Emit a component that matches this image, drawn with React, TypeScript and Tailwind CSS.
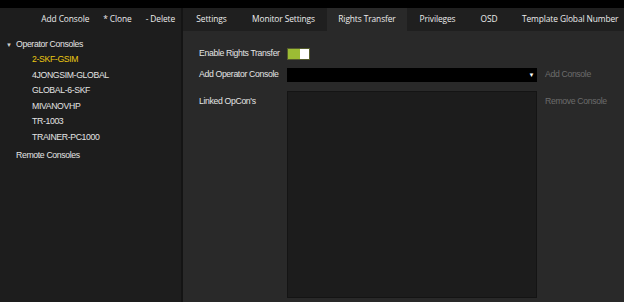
import React from 'react'

const CONSOLES = ['2-SKF-GSIM', '4JONGSIM-GLOBAL', 'GLOBAL-6-SKF', 'MIVANOVHP', 'TR-1003', 'TRAINER-PC1000']

const TABS = [
  { label: 'Settings', w: 'w-[57px]' },
  { label: 'Monitor Settings', w: 'w-[87px]' },
  { label: 'Rights Transfer', w: 'w-[80px]', active: true },
  { label: 'Privileges', w: 'w-[61px]' },
  { label: 'OSD', w: 'w-[42px]' },
  { label: 'Template Global Number', w: 'flex-1' },
]

export default function App() {
  return (
    <div className="w-[624px] h-[302px] bg-black flex flex-col overflow-hidden font-['Liberation_Sans',Arial,sans-serif] text-[8.7px] tracking-[-0.35px] text-[#e4e4e4]">
      <div className="h-[8px] bg-black" />
      <div className="flex flex-1 min-h-0">
        {/* Sidebar */}
        <div className="w-[183px] bg-[#1d1d1d] border-r-2 border-[#141414] flex flex-col">
          <div className="h-[23px] flex items-center justify-end pr-[6px] gap-[14px] text-[#ececec] font-['Open_Sans',sans-serif] text-[8.4px] tracking-[-0.1px]">
            <span>Add Console</span>
            <span>* Clone</span>
            <span>- Delete</span>
          </div>
          <div className="pt-[7px] pl-[6px]">
            <div className="flex items-center h-[14px]">
              <span className="text-[6px] w-[10px] text-[#cfcfcf]">▼</span>
              <span>Operator Consoles</span>
            </div>
            <div className="pl-[26px] flex flex-col">
              {CONSOLES.map((c, i) => (
                <div key={c} className={`h-[15.5px] flex items-center ${i === 0 ? 'text-[#ecc812]' : ''}`}>
                  {c}
                </div>
              ))}
            </div>
            <div className="pl-[10px] mt-[4px] h-[14px] flex items-center">Remote Consoles</div>
          </div>
        </div>

        {/* Main */}
        <div className="flex-1 flex flex-col bg-[#292929]">
          <div className="h-[23px] flex bg-[#1f1f1f] font-['Open_Sans',sans-serif] text-[8.4px] tracking-[-0.1px] text-[#ececec]">
            {TABS.map(t => (
              <div
                key={t.label}
                className={`${t.w} flex items-center ${t.label === 'Template Global Number' ? 'pl-[12px]' : 'justify-center'} ${t.active ? 'bg-[#292929]' : ''}`}
              >
                {t.label}
              </div>
            ))}
          </div>
          <div className="flex-1 pl-[16px] pt-[16px] flex flex-col">
            <div className="flex items-center h-[14px]">
              <span className="w-[88px]">Enable Rights Transfer</span>
              <div className="w-[23px] h-[12px] bg-[#545b2c] p-[1px] flex">
                <div className="w-[12px] bg-[#9cbc34]" />
                <div className="flex-1 bg-white" />
              </div>
            </div>
            <div className="flex items-center mt-[7px] h-[14px]">
              <span className="w-[88px]">Add Operator Console</span>
              <div className="w-[250px] h-[14px] bg-black flex items-center justify-end pr-[3px]">
                <span className="text-[6px] text-white">▼</span>
              </div>
              <span className="ml-[8px] text-[#6c6c6c]">Add Console</span>
            </div>
            <div className="flex mt-[9px]">
              <span className="w-[88px] pt-[4px]">Linked OpCon's</span>
              <div className="w-[250px] h-[207px] bg-[#1c1c1c] border border-[#141414]" />
              <span className="ml-[8px] pt-[4px] text-[#6c6c6c]">Remove Console</span>
            </div>
          </div>
        </div>
      </div>
    </div>
  )
}
